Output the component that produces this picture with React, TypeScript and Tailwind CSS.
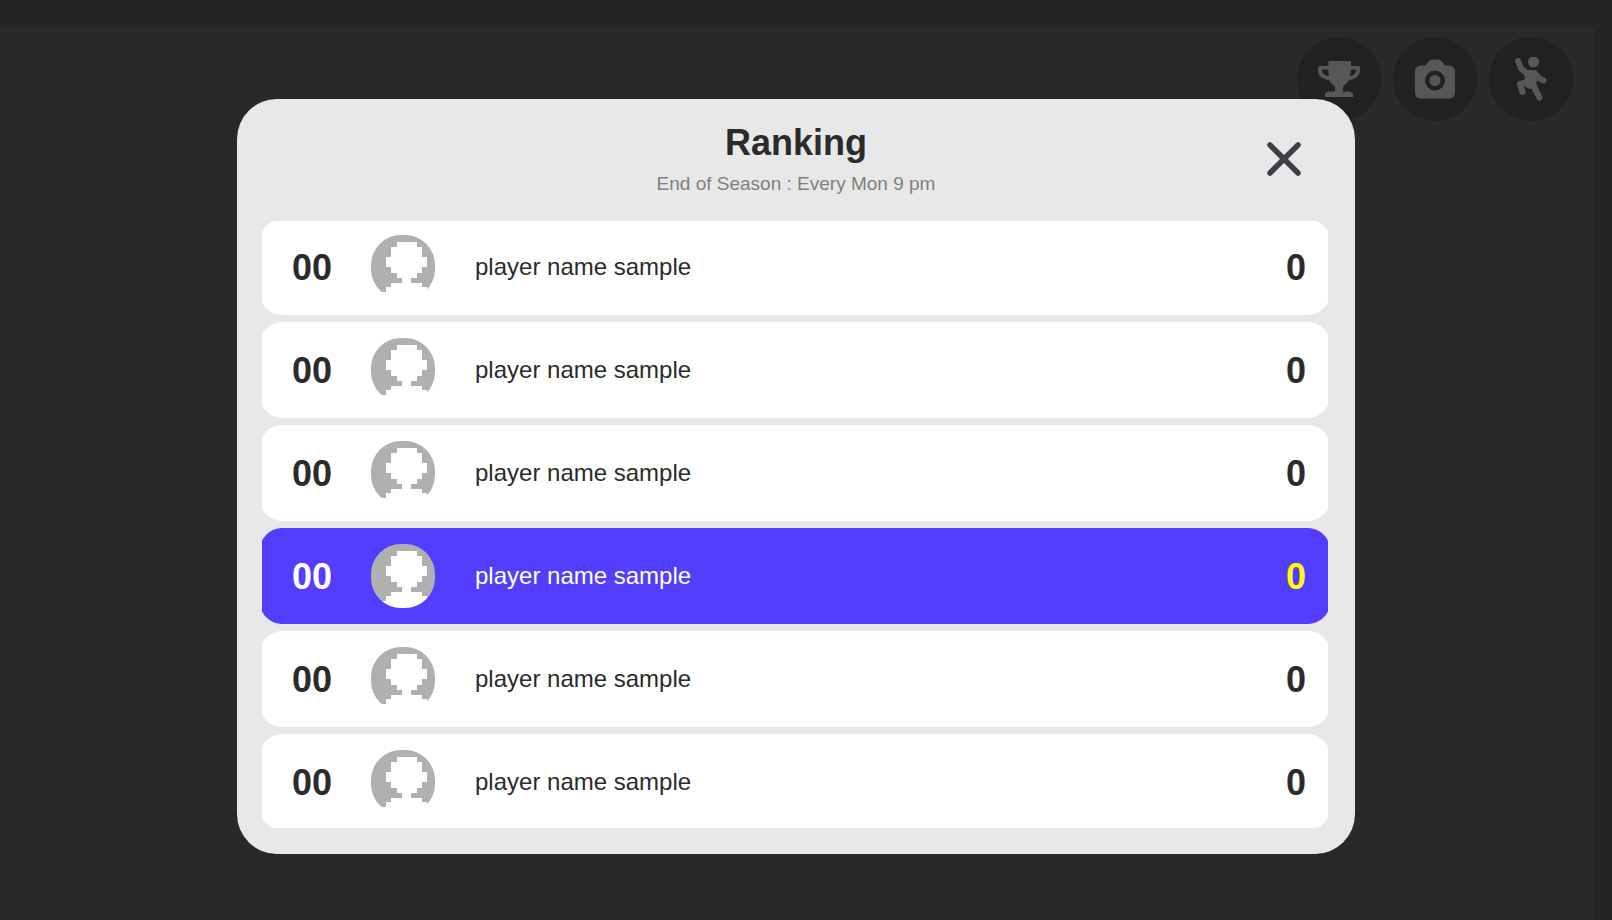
import React from "react";

type Player = { id: number; rank: string; name: string; score: string; current?: boolean };

const players: Player[] = [1, 2, 3, 4, 5, 6].map((id) => ({
  id,
  rank: "00",
  name: "player name sample",
  score: "0",
  current: id === 4,
}));

function TrophyIcon() {
  return (
    <svg viewBox="0 0 42 36" className="h-9 w-[42px]" fill="currentColor" aria-hidden="true">
      <path
        fillRule="evenodd"
        d="M10.3 0H33V5H40.500Q42 5 42 6.500V9.500C42 14.500 38 18.500 31 19C29.500 22 27 24 25 25.500V30.500H31.500Q35 31 35 34V36H7V34Q7 31 10.500 30.500H17V25.500C15 24 12.500 22 11 19C4 18.500 0 14.500 0 9.500V6.500Q0 5 1.500 5H10.300ZM10.300 8.500H4V9.500C4 12.500 7 14.800 11 15Q10.300 12 10.300 8.500ZM33 8.500Q33 12 31.500 15C35.500 14.800 38 12.500 38 9.500V8.500Z"
      />
    </svg>
  );
}

function CameraIcon() {
  return (
    <svg viewBox="0 0 40 40" className="size-10" fill="currentColor" aria-hidden="true">
      <path
        fillRule="evenodd"
        d="M18 .500H22.500Q25 .500 27 2.500L30 6.500H34Q40 7 40 12.500V34Q39.500 39.500 34.500 39.500H5.500Q.500 39.500 0 34V12.500Q0 7 6 6.500H10.500L13.500 2.500Q15.500 .500 18 .500ZM20 11.500A10 10 0 1 0 20 31.500A10 10 0 1 0 20 11.500Z"
      />
      <circle cx="20" cy="21.500" r="5.600" />
    </svg>
  );
}

function PersonIcon() {
  return (
    <svg
      viewBox="0 0 32 44"
      className="h-11 w-8"
      fill="none"
      stroke="currentColor"
      strokeLinecap="round"
      strokeLinejoin="round"
      aria-hidden="true"
    >
      <circle cx="18.500" cy="5" r="5.500" fill="currentColor" stroke="none" />
      <path d="M3 4L6 11.500L12 16.500" strokeWidth="6" />
      <path d="M20 16.500L24 21L28.500 23.500" strokeWidth="6" />
      <path d="M10 14H20L23 18L20 27L22 30L15 31L9 28L11 21Z" fill="currentColor" strokeWidth="2" />
      <path d="M12 25L5 27L7.500 35" strokeWidth="6" />
      <path d="M18 28L24.500 40.500" strokeWidth="6" />
    </svg>
  );
}

function CloseIcon() {
  return (
    <svg viewBox="0 0 34 34" className="size-[34px]" stroke="currentColor" strokeWidth="5.500" strokeLinecap="round" aria-hidden="true">
      <path d="M3 3L31 31M31 3L3 31" />
    </svg>
  );
}

function Avatar({ id }: { id: number }) {
  const clipId = `avatar-shape-${id}`;
  return (
    <svg viewBox="0 0 64 64" className="size-16 shrink-0" shapeRendering="crispEdges" aria-hidden="true">
      <defs>
        <clipPath id={clipId}>
          <rect width="64" height="64" rx="30" />
        </clipPath>
      </defs>
      <path
        clipPath={`url(#${clipId})`}
        fill="#fff"
        d="M26 7H46V12H51V22H56V32H51V38H46V43H40V48H51V52H56V56H64V64H0V57H15V52H20V48H31V43H26V38H20V32H15V22H20V12H26Z"
      />
      <path
        clipPath={`url(#${clipId})`}
        fill="#b0b0b0"
        d="M0 0H64V56H56V52H51V48H40V43H46V38H51V32H56V22H51V12H46V7H26V12H20V22H15V32H20V38H26V43H31V48H20V52H15V57H0Z"
      />
    </svg>
  );
}

function RoundButton({ label, children }: { label: string; children: React.ReactNode }) {
  return (
    <button
      type="button"
      aria-label={label}
      className="flex size-[84px] items-center justify-center rounded-full bg-[#212121] text-[#575757]"
    >
      {children}
    </button>
  );
}

function PlayerRow({ player }: { player: Player }) {
  const rowColor = player.current ? "bg-[#533dff] text-white" : "bg-white text-[#2b2b2b]";
  const scoreColor = player.current ? "text-[#ffff00]" : "";
  return (
    <li className={`flex h-24 items-center rounded-[22px] pr-6 pl-8 ${rowColor}`}>
      <span className="w-[79px] pt-0.5 text-4xl font-bold">{player.rank}</span>
      <Avatar id={player.id} />
      <span className="ml-10 flex-1 text-2xl">{player.name}</span>
      <span className={`pt-0.5 text-4xl font-bold ${scoreColor}`}>{player.score}</span>
    </li>
  );
}

export default function App() {
  return (
    <div className="flex min-h-screen flex-col bg-[#242424] pt-[27px] pr-[17px] font-['Liberation_Sans',Arial,sans-serif]">
      <main className="flex-1 bg-[#292929]">
        <nav className="flex justify-end gap-3 pt-2.5 pr-[22px]" aria-label="Game menu">
          <RoundButton label="Ranking">
            <TrophyIcon />
          </RoundButton>
          <RoundButton label="Camera">
            <CameraIcon />
          </RoundButton>
          <RoundButton label="Emotes">
            <PersonIcon />
          </RoundButton>
        </nav>
      </main>

      <div className="absolute inset-x-0 top-0 pt-[99px] pr-[257px] pl-[237px]">
        <section
          role="dialog"
          aria-labelledby="ranking-title"
          className="rounded-[40px] bg-[#e8e8e8] pt-6 pr-[27px] pb-[26px] pl-[25px]"
        >
          <header className="grid h-[98px] grid-cols-[1fr_auto_1fr] pl-0.5">
            <div className="col-start-2 text-center">
              <h1 id="ranking-title" className="text-4xl font-bold text-[#2b2b2b]">
                Ranking
              </h1>
              <p className="mt-[7px] text-[19px] leading-7 text-[#808080]">End of Season : Every Mon 9 pm</p>
            </div>
            <button type="button" aria-label="Close" className="mt-[19px] mr-[27px] self-start justify-self-end text-[#3f3e46]">
              <CloseIcon />
            </button>
          </header>
          <div className="overflow-hidden">
            <ol className="-m-0.5 flex flex-col gap-[7px]">
              {players.map((player) => (
                <PlayerRow key={player.id} player={player} />
              ))}
            </ol>
          </div>
        </section>
      </div>
    </div>
  );
}
